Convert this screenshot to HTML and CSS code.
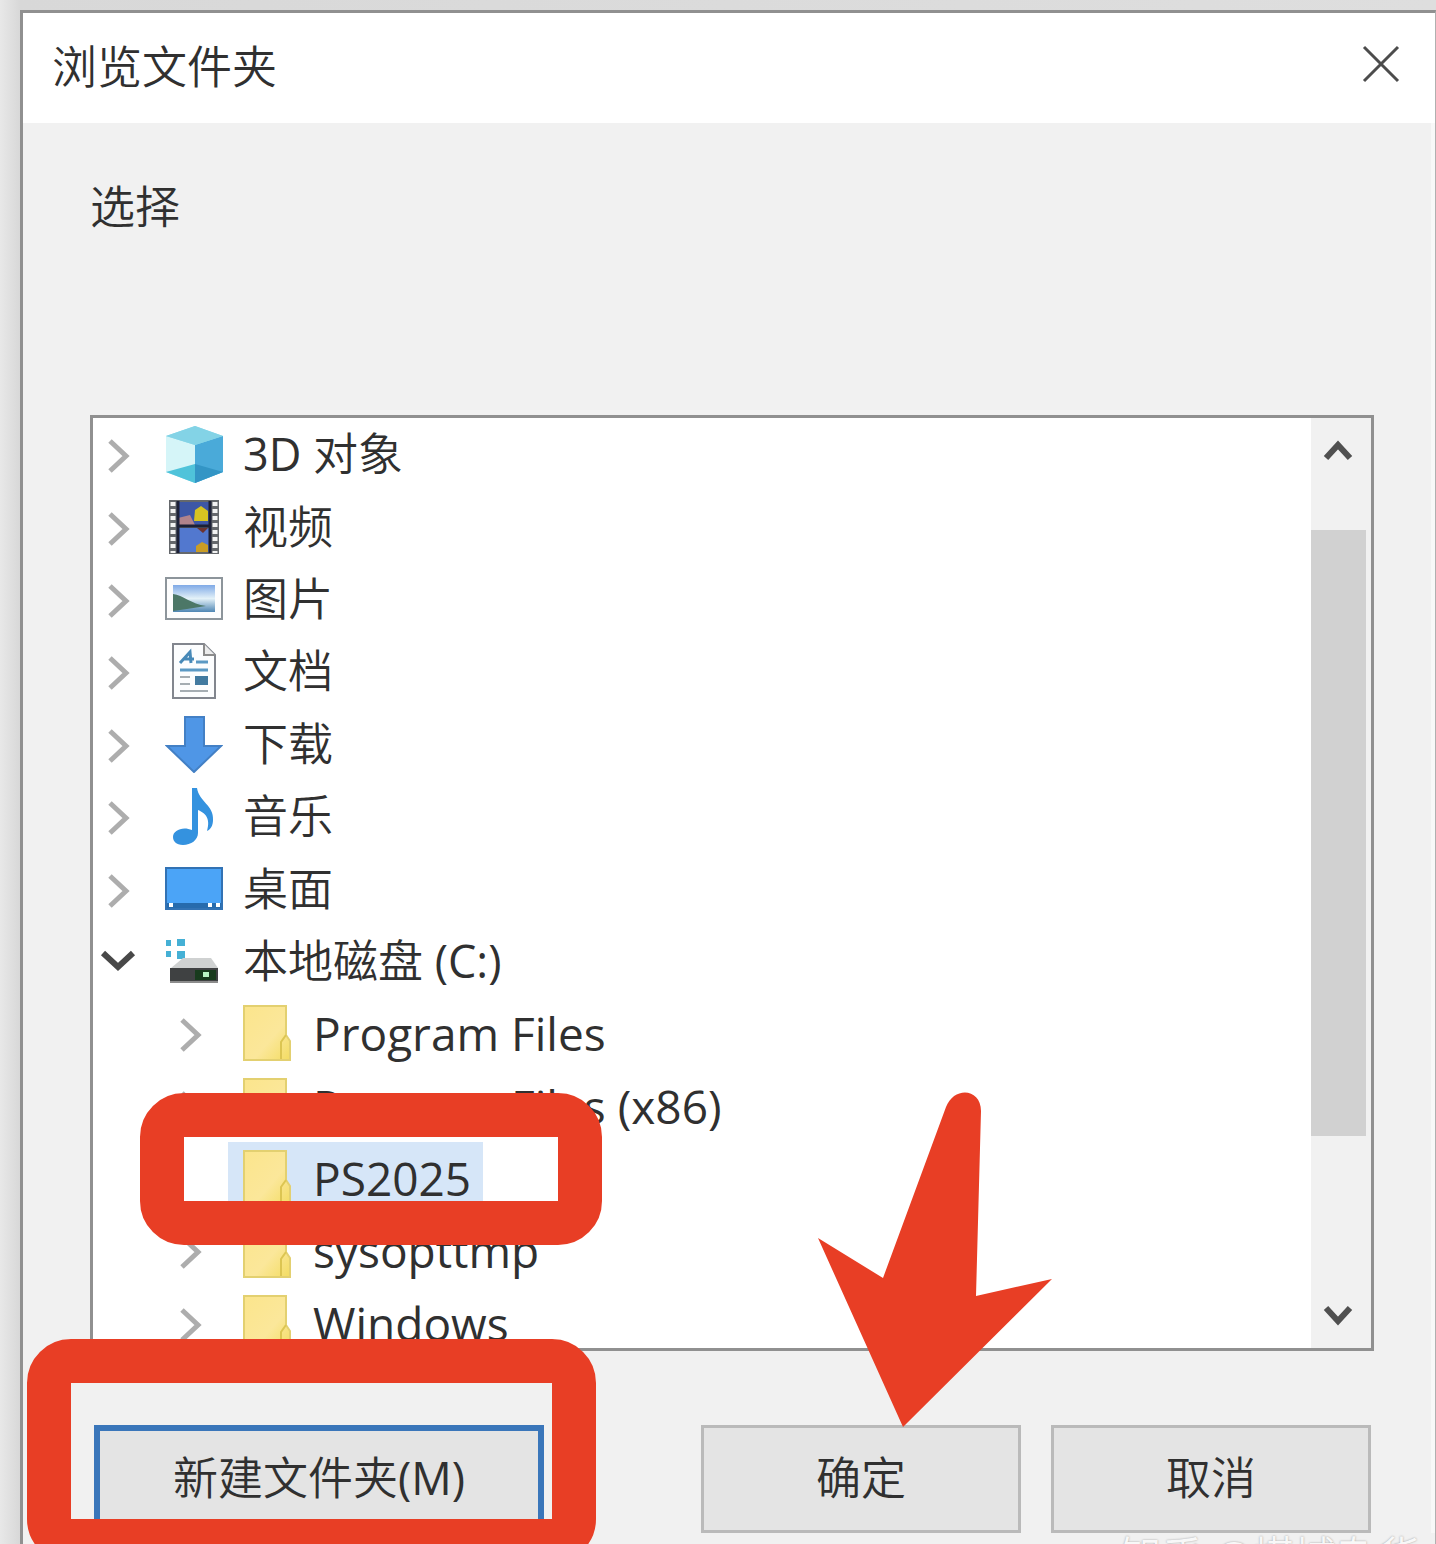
FILE: index.html
```html
<!DOCTYPE html>
<html lang="zh-CN">

<head>
  <meta charset="UTF-8">
  <meta name="viewport" content="width=device-width, initial-scale=1.0">
  <title>浏览文件夹</title>
  <link rel="stylesheet" href="styles.css">
</head>

<body>
  <!-- shared icons -->
  <svg class="defs" width="0" height="0" aria-hidden="true">
    <defs>
      <symbol id="chevron" viewBox="0 0 50 72">
        <path d="M17 23 L33 38 L17 53" fill="none" stroke="#adadad" stroke-width="5"/>
      </symbol>
      <symbol id="chevron-open" viewBox="0 0 50 72">
        <path d="M10 28 L25 42 L40 28" fill="none" stroke="#484848" stroke-width="6"/>
      </symbol>
      <linearGradient id="folderFill" x1="0" y1="0" x2="1" y2="1">
        <stop offset="0" stop-color="#fbe58c"/>
        <stop offset="0.6" stop-color="#fbe79a"/>
        <stop offset="1" stop-color="#f3dc62"/>
      </linearGradient>
      <symbol id="folder" viewBox="0 0 58 58">
        <path d="M7 2 H49 V31 L53 37 V56 H7 Z" fill="url(#folderFill)" stroke="#e3d070" stroke-width="2"/>
        <path d="M49 31 L44 38 V55" fill="none" stroke="#dcc552" stroke-width="2"/>
      </symbol>
    </defs>
  </svg>

  <div class="desktop">
    <div class="dialog" role="dialog" aria-labelledby="dialogTitle">
      <header class="titlebar">
        <h1 id="dialogTitle">浏览文件夹</h1>
        <button type="button" class="close-btn" aria-label="关闭">
          <svg viewBox="0 0 40 40"><path d="M3 3 L37 37 M37 3 L3 37" stroke="#4c4c4c" stroke-width="3"/></svg>
        </button>
      </header>

      <main class="content">
        <p class="prompt">选择</p>

        <div class="list-box">
          <ul class="tree">
            <li class="row">
              <svg class="arrow"><use href="#chevron"/></svg>
              <span class="item">
                <svg class="icon" viewBox="0 0 58 58">
                  <path d="M1 11 L30 1 L58 11 V47 L30 58 L1 47 Z" fill="#8fdcec"/>
                  <path d="M1 11 L30 20 V42 L1 47 Z" fill="#d5f5f8"/>
                  <path d="M30 20 L58 11 V47 L30 58 Z" fill="#4aaad9"/>
                  <path d="M1 11 L30 1 L58 11 L30 20 Z" fill="#83d3e6"/>
                  <path d="M1 47 L30 39 V58 Z" fill="#4fc3da"/>
                  <path d="M30 39 L58 47 L30 58 Z" fill="#3395c5"/>
                </svg>
                3D 对象
              </span>
            </li>
            <li class="row">
              <svg class="arrow"><use href="#chevron"/></svg>
              <span class="item">
                <svg class="icon" viewBox="0 0 58 58">
                  <rect x="4" y="2" width="50" height="54" fill="#65686c"/>
                  <path d="M8 4 V55 M50 4 V55" stroke="#f2f2f2" stroke-width="5" stroke-dasharray="4 3"/>
                  <rect x="13" y="4" width="32" height="23" fill="#3d57a6"/>
                  <rect x="13" y="30" width="32" height="24" fill="#5278cf"/>
                  <path d="M13 20 L25 17 L30 27 H13 Z" fill="#b1838c"/>
                  <path d="M30 12 L36 8 L43 13 V23 H29 Z" fill="#d6c321"/>
                  <path d="M32 30 H43 L38 35 Z" fill="#6d3330"/>
                  <path d="M31 54 V48 L37 44 L43 47 V54 Z" fill="#c99d26"/>
                  <path d="M13 28 H45 M13 3 V55 M45 3 V55" stroke="#1c2036" stroke-width="3"/>
                </svg>
                视频
              </span>
            </li>
            <li class="row">
              <svg class="arrow"><use href="#chevron"/></svg>
              <span class="item">
                <svg class="icon" viewBox="0 0 58 58">
                  <defs>
                    <linearGradient id="sky" x1="0" y1="0" x2="0" y2="1">
                      <stop offset="0" stop-color="#7fa9e6"/>
                      <stop offset="0.5" stop-color="#e3f1f8"/>
                      <stop offset="1" stop-color="#4f86b3"/>
                    </linearGradient>
                  </defs>
                  <rect x="1" y="8" width="56" height="41" fill="#fdfdfd" stroke="#8d959b" stroke-width="2"/>
                  <rect x="8" y="15" width="42" height="27" fill="url(#sky)"/>
                  <path d="M8 24 C18 25 26 34 41 36 L22 39 L8 41 Z" fill="#4c7767"/>
                </svg>
                图片
              </span>
            </li>
            <li class="row">
              <svg class="arrow"><use href="#chevron"/></svg>
              <span class="item">
                <svg class="icon" viewBox="0 0 58 58">
                  <path d="M8 2 H39 L50 13 V56 H8 Z" fill="#fcfdfe" stroke="#82868e" stroke-width="2"/>
                  <path d="M39 2 V13 H50" fill="#ececec" stroke="#8b8b8b" stroke-width="2"/>
                  <path d="M15 21 L25 10 L26 21 M18 17 H29" fill="none" stroke="#4789b8" stroke-width="3"/>
                  <path d="M31 20 H43 M15 28 H43" stroke="#5b99c4" stroke-width="3"/>
                  <path d="M15 35 H25 M15 42 H25 M15 49 H43" stroke="#a5adb2" stroke-width="2"/>
                  <rect x="30" y="34" width="13" height="9" fill="#427aa0"/>
                </svg>
                文档
              </span>
            </li>
            <li class="row">
              <svg class="arrow"><use href="#chevron"/></svg>
              <span class="item">
                <svg class="icon" viewBox="0 0 58 58">
                  <path d="M20 2 H39 V31 H56 L29 57 L2 31 H20 Z" fill="#4f96e6" stroke="#4380c5" stroke-width="2"/>
                </svg>
                下载
              </span>
            </li>
            <li class="row">
              <svg class="arrow"><use href="#chevron"/></svg>
              <span class="item">
                <svg class="icon" viewBox="0 0 58 58">
                  <path d="M27 1 H32 C34 15 49 18 48 33 C48 38 46 42 42 44 C46 31 40 26 33 23 V46 C33 53 26 58 18 58 C11 58 8 54 8 50 C8 43 18 39 27 43 Z" fill="#3492df"/>
                </svg>
                音乐
              </span>
            </li>
            <li class="row">
              <svg class="arrow"><use href="#chevron"/></svg>
              <span class="item">
                <svg class="icon" viewBox="0 0 58 58">
                  <rect x="1" y="8" width="56" height="41" fill="#4ba4f7" stroke="#3272b4" stroke-width="2"/>
                  <rect x="2" y="43" width="54" height="5" fill="#276bad"/>
                  <path d="M4 45 H8 M43 45 H47 M51 45 H55" stroke="#fff" stroke-width="4"/>
                </svg>
                桌面
              </span>
            </li>
            <li class="row">
              <svg class="arrow"><use href="#chevron-open"/></svg>
              <span class="item">
                <svg class="icon" viewBox="0 0 58 58">
                  <path d="M1 8 H6 V14 H1 Z M12 7 H20 V14 H12 Z M1 19 H6 V25 H1 Z M12 19 H20 V27 H12 Z" fill="#45b0d5"/>
                  <path d="M6 36 L18 26 H46 L53 36 Z" fill="#cfd1d1"/>
                  <rect x="5" y="36" width="48" height="14" fill="#3f4142"/>
                  <rect x="30" y="38" width="21" height="10" fill="#183b1d"/>
                  <rect x="38" y="40" width="6" height="5" fill="#b8f5c3"/>
                  <path d="M5 50 H53" stroke="#8c8c8c" stroke-width="2"/>
                </svg>
                本地磁盘 (C:)
              </span>
            </li>
            <li class="row nested">
              <svg class="arrow"><use href="#chevron"/></svg>
              <span class="item"><svg class="icon"><use href="#folder"/></svg>Program Files</span>
            </li>
            <li class="row nested">
              <svg class="arrow"><use href="#chevron"/></svg>
              <span class="item"><svg class="icon"><use href="#folder"/></svg>Program Files (x86)</span>
            </li>
            <li class="row nested">
              <span class="arrow"></span>
              <span class="item selected"><svg class="icon"><use href="#folder"/></svg>PS2025</span>
              <span class="mark mark-folder"></span>
            </li>
            <li class="row nested">
              <svg class="arrow"><use href="#chevron"/></svg>
              <span class="item"><svg class="icon"><use href="#folder"/></svg>sysopttmp</span>
            </li>
            <li class="row nested">
              <svg class="arrow"><use href="#chevron"/></svg>
              <span class="item"><svg class="icon"><use href="#folder"/></svg>Windows</span>
            </li>
          </ul>

          <div class="scrollbar">
            <button type="button" class="scroll-btn" aria-label="向上滚动">
              <svg viewBox="0 0 30 26"><path d="M3 20 L15 7 L27 20" fill="none" stroke="#505050" stroke-width="6"/></svg>
            </button>
            <div class="track"><div class="thumb"></div></div>
            <button type="button" class="scroll-btn" aria-label="向下滚动">
              <svg viewBox="0 0 30 26"><path d="M3 6 L15 19 L27 6" fill="none" stroke="#505050" stroke-width="6"/></svg>
            </button>
          </div>
        </div>

        <footer class="actions">
          <div class="action action-new">
            <button type="button" class="btn btn-focus">新建文件夹(M)</button>
            <span class="mark mark-new"></span>
          </div>
          <div class="action">
            <button type="button" class="btn">确定</button>
            <svg class="pointer" viewBox="0 0 240 340" aria-hidden="true">
              <path d="M90 338 L5 149 L70 189 L133 18 C141 -3 168 -1 168 22 L163 207 L239 190 Z" fill="#e83e25"/>
            </svg>
          </div>
          <div class="action">
            <button type="button" class="btn">取消</button>
          </div>
        </footer>
      </main>
    </div>
    <span class="watermark">知乎 @煤城杂货</span>
  </div>
</body>

</html>
```
FILE: styles.css
```css
* {
  box-sizing: border-box;
}

body {
  margin: 0;
  background-color: #e2e2e2;
  color: #303030;
  font-family: "Open Sans", "Noto Sans CJK SC DemiLight", "Noto Sans CJK SC", sans-serif;
  font-size: 45px;
  font-weight: 400;
}

.defs {
  position: absolute;
}

.desktop {
  position: relative;
  height: 100vh;
  overflow: hidden;
  padding: 10px 0 0 20px;
  background: linear-gradient(to right, #e8e8e8, #d8d8d8 20px, #dedede);
}

.dialog {
  min-height: 100%;
  border: 3px solid #909090;
  border-right: 1px solid #b0b0b0;
  border-bottom: 0;
  background-color: #f1f1f1;
}

.titlebar {
  display: flex;
  align-items: center;
  justify-content: space-between;
  height: 110px;
  padding: 0 34px 8px 29px;
  background-color: #fff;
}

.titlebar h1 {
  margin: 0;
  font-size: 45px;
  font-weight: 400;
}

.close-btn {
  display: flex;
  padding: 0;
  border: 0;
  background: none;
}

.close-btn svg {
  width: 40px;
  height: 40px;
}

.content {
  padding: 52px 57px 0 67px;
  border-right: 4px solid #f8f8f8;
}

.prompt {
  height: 240px;
  margin: 0;
  line-height: 64px;
}

.list-box {
  display: flex;
  height: 936px;
  overflow: hidden;
  border: 3px solid #909090;
  background-color: #fff;
}

.tree {
  display: flex;
  flex: 1;
  flex-direction: column;
  height: 941px;
  margin: 0;
  padding: 0;
  list-style: none;
}

.row {
  position: relative;
  display: flex;
  flex: 1;
  align-items: center;
}

.nested {
  padding-left: 72px;
}

.arrow {
  width: 50px;
  height: 72px;
  margin-right: 13px;
}

.item {
  display: flex;
  align-items: center;
  gap: 20px;
  height: 72px;
  padding: 0 15px 0 9px;
  line-height: 70px;
  white-space: nowrap;
}

.nested .item {
  gap: 18px;
  padding-right: 12px;
  font-size: 46px;
}

.selected {
  background-color: #d6e6f8;
}

.icon {
  width: 58px;
  height: 58px;
}

.scrollbar {
  display: flex;
  flex-direction: column;
  width: 60px;
  background-color: #f1f1f1;
}

.scroll-btn {
  display: flex;
  align-items: center;
  justify-content: center;
  height: 66px;
  padding: 0 6px 0 0;
  border: 0;
  background: none;
}

.scroll-btn svg {
  width: 30px;
  height: 26px;
}

.track {
  flex: 1;
  padding-top: 46px;
}

.thumb {
  width: 55px;
  height: 606px;
  background-color: #d1d1d1;
}

.actions {
  display: flex;
  gap: 30px;
  padding: 74px 3px 0 4px;
}

.action {
  position: relative;
  width: 320px;
}

.action-new {
  width: 450px;
  margin-right: auto;
}

.btn {
  display: block;
  width: 100%;
  height: 108px;
  padding: 0 0 8px;
  border: 3px solid #bababa;
  background-color: #e4e4e4;
  color: #303030;
  font: inherit;
}

.btn-focus {
  border: 6px solid #3a76ba;
}

/* red callouts drawn over the dialog */
.mark {
  position: absolute;
  z-index: 1;
  border: 44px solid #e83e25;
  border-radius: 44px;
  pointer-events: none;
}

.mark-folder {
  top: -49px;
  left: 47px;
  width: 462px;
  height: 152px;
}

.mark-new {
  top: -86px;
  left: -67px;
  width: 569px;
  height: 224px;
}

.pointer {
  position: absolute;
  bottom: 104px;
  left: 112px;
  width: 240px;
  height: 340px;
  pointer-events: none;
}

.watermark {
  position: absolute;
  right: 16px;
  bottom: -36px;
  color: #f8f8f8;
  font-size: 42px;
  line-height: 48px;
  text-shadow: 0 0 2px #999;
}
```
